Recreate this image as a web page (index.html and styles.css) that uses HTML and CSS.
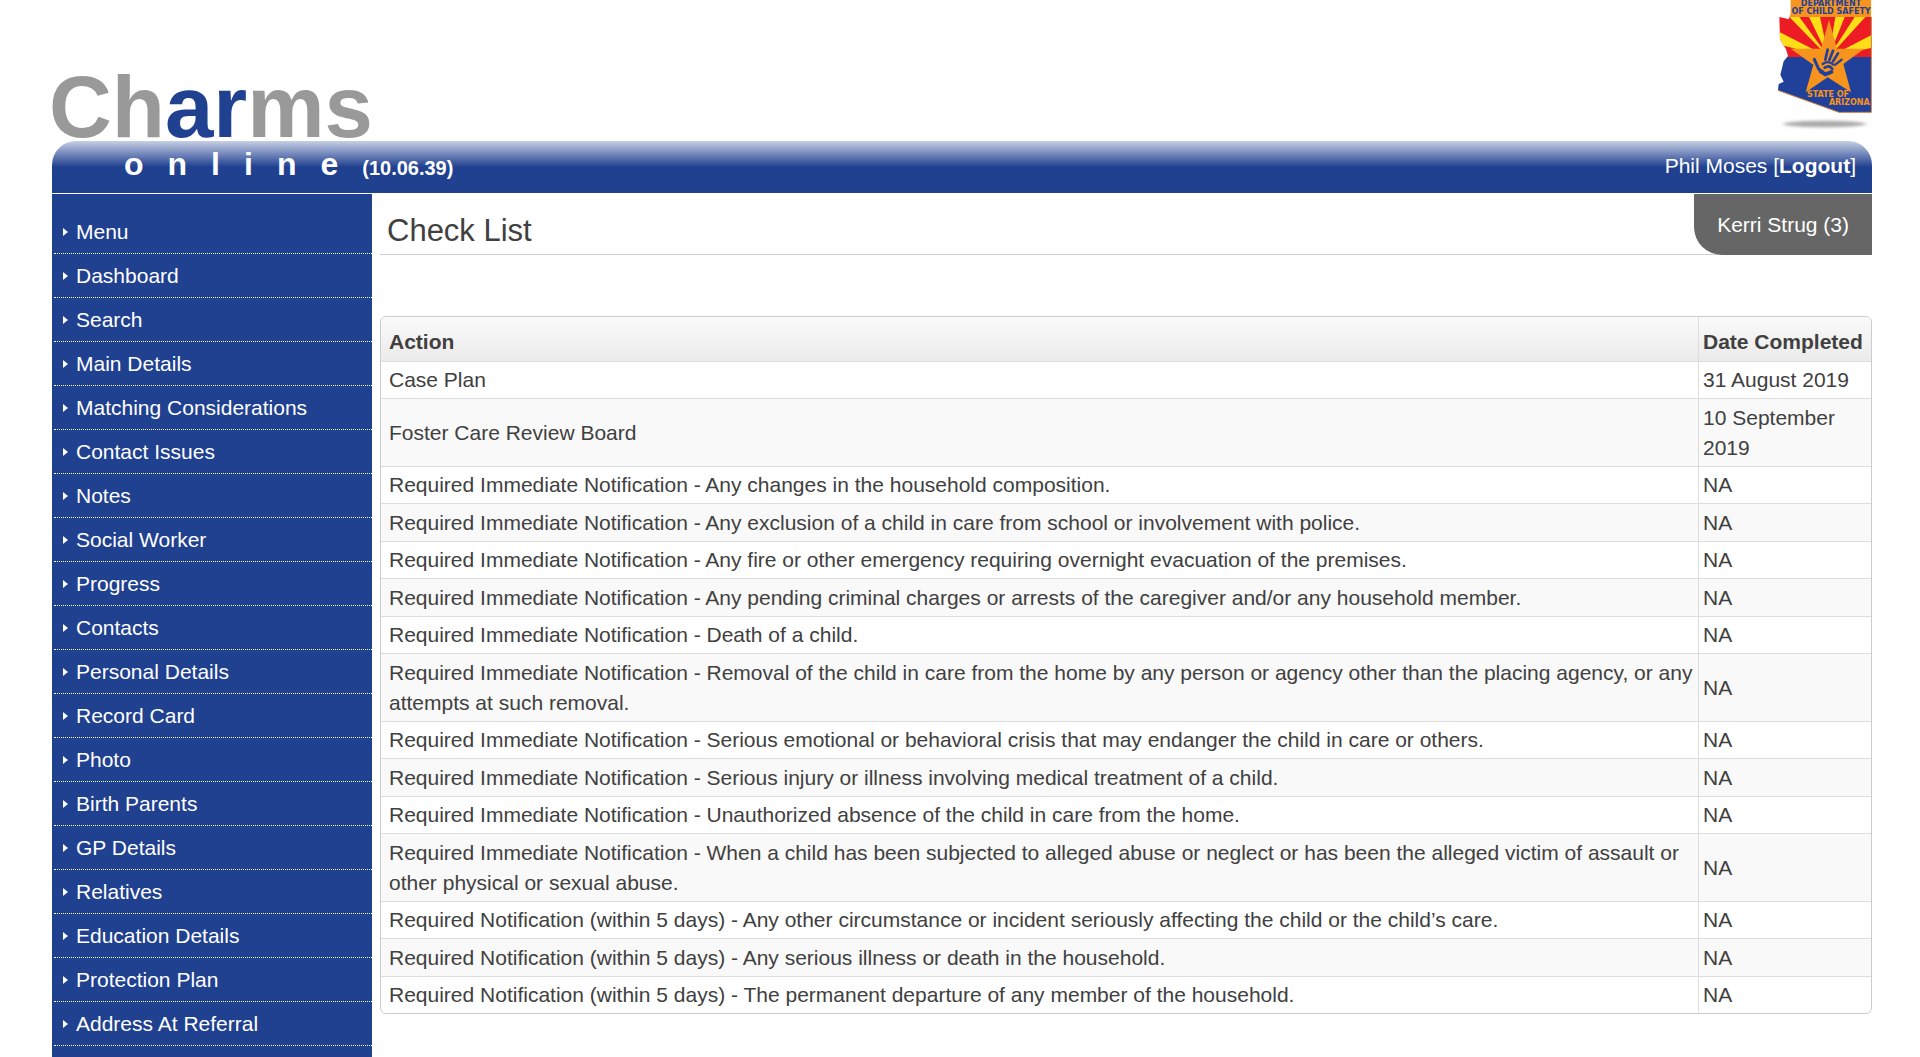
FILE: index.html
```html
<!DOCTYPE html>
<html lang="en">
<head>
    <meta charset="UTF-8">
    <meta name="viewport" content="width=device-width, initial-scale=1.0">
    <title>Charms Online - Check List</title>
    <link rel="stylesheet" href="styles.css">
</head>
<body>
    <header>
        <div class="brand">
            <div class="wordmark">Ch<span>ar</span>ms</div>
            <svg class="seal" viewBox="21 0 285 405" role="img" aria-label="Arizona Department of Child Safety">
                <defs>
                    <clipPath id="state">
                        <path d="M62 0H304V337H207L24 271L26 252L41 245L31 224L41 184L54 168L48 148L30 118L28 51L42 54L56 58L62 40Z"/>
                    </clipPath>
                    <filter id="soft" x="-20%" y="-100%" width="140%" height="300%"><feGaussianBlur stdDeviation="6 4"/></filter>
                </defs>
                <ellipse cx="164" cy="372" rx="124" ry="10" fill="#aaa" filter="url(#soft)"/>
                <g clip-path="url(#state)">
                    <rect x="20" width="290" height="51" fill="#f7941d"/>
                    <rect x="20" y="51" width="290" height="121" fill="#ed1c24"/>
                    <g fill="#ffde17">
                        <path d="M176 172L20 132V92Z"/>
                        <path d="M176 172L58 51H88Z"/>
                        <path d="M176 172L117 51H150Z"/>
                        <path d="M176 172L196 51H224Z"/>
                        <path d="M176 172L254 51H286Z"/>
                        <path d="M176 172L310 102V142Z"/>
                    </g>
                    <rect x="20" y="171" width="290" height="170" fill="#21409a"/>
                    <path d="M177 60L201 146H283L220 192L243 277L173 232L107 277L130 194L62 146H153Z" fill="#f7941d"/>
                    <!-- hand print -->
                    <g fill="none" stroke="#21409a" stroke-linecap="round">
                        <path d="M133 178L146 207L158 215" stroke-width="9"/>
                        <path d="M166 179L173 149" stroke-width="8"/>
                        <path d="M178 180L189 152" stroke-width="8"/>
                        <path d="M189 184L204 160" stroke-width="8"/>
                        <path d="M196 194L215 179" stroke-width="7"/>
                        <path d="M158 192Q174 180 190 194" stroke-width="7"/>
                        <path d="M164 203Q178 194 187 207" stroke-width="8"/>
                        <path d="M152 214L166 223L184 216" stroke-width="12"/>
                    </g>
                </g>
                <path d="M304 51V337H207L24 271" fill="none" stroke="#c77a3a" stroke-width="3"/>
                <g class="seal-text" text-anchor="middle">
                    <text x="183" y="19" fill="#21409a">DEPARTMENT</text>
                    <text x="183" y="42" fill="#21409a">OF CHILD SAFETY</text>
                    <text x="174" y="291" fill="#f7941d">STATE OF</text>
                    <text x="238" y="316" fill="#f7941d">ARIZONA</text>
                </g>
            </svg>
        </div>
        <div class="bar">
            <div class="product"><span class="online">online</span><span class="version">(10.06.39)</span></div>
            <div class="user">Phil Moses [<a href="#">Logout</a>]</div>
        </div>
    </header>
    <div class="page">
        <nav>
            <ul>
                <li><a href="#">Menu</a></li>
                <li><a href="#">Dashboard</a></li>
                <li><a href="#">Search</a></li>
                <li><a href="#">Main Details</a></li>
                <li><a href="#">Matching Considerations</a></li>
                <li><a href="#">Contact Issues</a></li>
                <li><a href="#">Notes</a></li>
                <li><a href="#">Social Worker</a></li>
                <li><a href="#">Progress</a></li>
                <li><a href="#">Contacts</a></li>
                <li><a href="#">Personal Details</a></li>
                <li><a href="#">Record Card</a></li>
                <li><a href="#">Photo</a></li>
                <li><a href="#">Birth Parents</a></li>
                <li><a href="#">GP Details</a></li>
                <li><a href="#">Relatives</a></li>
                <li><a href="#">Education Details</a></li>
                <li><a href="#">Protection Plan</a></li>
                <li><a href="#">Address At Referral</a></li>
            </ul>
        </nav>
        <main>
            <div class="title-row">
                <h1>Check List</h1>
                <div class="person">Kerri Strug (3)</div>
            </div>
            <table>
                <thead>
                    <tr><th>Action</th><th class="date">Date Completed</th></tr>
                </thead>
                <tbody>
                    <tr><td>Case Plan</td><td>31 August 2019</td></tr>
                    <tr><td>Foster Care Review Board</td><td>10 September 2019</td></tr>
                    <tr><td>Required Immediate Notification - Any changes in the household composition.</td><td>NA</td></tr>
                    <tr><td>Required Immediate Notification - Any exclusion of a child in care from school or involvement with police.</td><td>NA</td></tr>
                    <tr><td>Required Immediate Notification - Any fire or other emergency requiring overnight evacuation of the premises.</td><td>NA</td></tr>
                    <tr><td>Required Immediate Notification - Any pending criminal charges or arrests of the caregiver and/or any household member.</td><td>NA</td></tr>
                    <tr><td>Required Immediate Notification - Death of a child.</td><td>NA</td></tr>
                    <tr><td>Required Immediate Notification - Removal of the child in care from the home by any person or agency other than the placing agency, or any attempts at such removal.</td><td>NA</td></tr>
                    <tr><td>Required Immediate Notification - Serious emotional or behavioral crisis that may endanger the child in care or others.</td><td>NA</td></tr>
                    <tr><td>Required Immediate Notification - Serious injury or illness involving medical treatment of a child.</td><td>NA</td></tr>
                    <tr><td>Required Immediate Notification - Unauthorized absence of the child in care from the home.</td><td>NA</td></tr>
                    <tr><td>Required Immediate Notification - When a child has been subjected to alleged abuse or neglect or has been the alleged victim of assault or other physical or sexual abuse.</td><td>NA</td></tr>
                    <tr><td>Required Notification (within 5 days) - Any other circumstance or incident seriously affecting the child or the child’s care.</td><td>NA</td></tr>
                    <tr><td>Required Notification (within 5 days) - Any serious illness or death in the household.</td><td>NA</td></tr>
                    <tr><td>Required Notification (within 5 days) - The permanent departure of any member of the household.</td><td>NA</td></tr>
                </tbody>
            </table>
        </main>
    </div>
</body>
</html>
```
FILE: styles.css
```css
* {
    box-sizing: border-box;
}
body {
    font-family: "Liberation Sans", Arial, sans-serif;
    font-size: 21px;
    line-height: 30px;
    color: #404040;
    background-color: #fff;
    margin: 0;
    padding: 0 48px 0 52px;
    min-height: 100vh;
    display: flex;
    flex-direction: column;
}
a {
    color: inherit;
    text-decoration: none;
}
.brand {
    height: 141px;
    display: flex;
    justify-content: space-between;
    align-items: flex-end;
}
.wordmark {
    font-size: 87px;
    line-height: 68px;
    font-weight: bold;
    color: #999;
    margin-left: -3px;
}
.wordmark span {
    color: #204090;
}
.seal {
    width: 95px;
    height: 135px;
    align-self: flex-start;
}
.seal-text {
    font-family: "DejaVu Sans", sans-serif;
    font-size: 24px;
    font-weight: bold;
}
.bar {
    height: 52px;
    padding: 0 16px 0 72px;
    display: flex;
    justify-content: space-between;
    color: #fff;
    background: linear-gradient(#c6cfe5, #204090 50%);
    border-radius: 24px 24px 0 0;
}
.product {
    display: flex;
    align-items: baseline;
    font-weight: bold;
    line-height: 46px;
}
.online {
    font-size: 32px;
    letter-spacing: 24px;
}
.version {
    font-size: 20px;
}
.user {
    line-height: 50px;
}
.user a {
    font-weight: bold;
}
.page {
    flex: 1;
    display: flex;
    gap: 8px;
    margin-top: 1px;
}
nav {
    flex: 0 0 320px;
    background-color: #204090;
    padding: 16px 0 0 2px;
}
nav ul {
    list-style: none;
    margin: 0;
    padding: 0;
}
nav li {
    border-bottom: 1px dotted #fff;
}
nav a {
    display: flex;
    align-items: center;
    gap: 8px;
    height: 43px;
    padding-left: 9px;
    color: #fff;
}
nav a:before {
    content: "";
    border: 4px solid transparent;
    border-left: 5px solid #fff;
    border-right: 0;
}
main {
    flex: 1;
}
.title-row {
    display: flex;
    justify-content: space-between;
    border-bottom: 1px solid #ccc;
    margin-bottom: 61px;
}
h1 {
    font-size: 31px;
    font-weight: normal;
    line-height: 60px;
    margin: 0;
    padding: 7px 0 0 7px;
    height: 60px;
}
.person {
    color: #fff;
    background-color: #666;
    border-radius: 0 0 0 28px;
    padding: 0 23px;
    line-height: 61px;
    margin-bottom: -1px;
}
table {
    width: 100%;
    border: 1px solid #ccc;
    border-radius: 6px;
    border-collapse: separate;
    border-spacing: 0;
    overflow: hidden;
}
th, td {
    text-align: left;
    padding: 3px 4px;
    border-top: 1px solid #ddd;
    vertical-align: middle;
}
th {
    padding: 10px 4px 4px;
    border-top: 0;
}
th:first-child, td:first-child {
    padding-left: 8px;
}
th + th, td + td {
    border-left: 1px solid #ddd;
}
thead tr {
    background: linear-gradient(#fafafa, #ebebeb);
}
tbody tr:nth-child(even) {
    background-color: #f9f9f9;
}
tbody tr:nth-child(even) td {
    padding-top: 4px;
}
.date {
    width: 173px;
}
```
